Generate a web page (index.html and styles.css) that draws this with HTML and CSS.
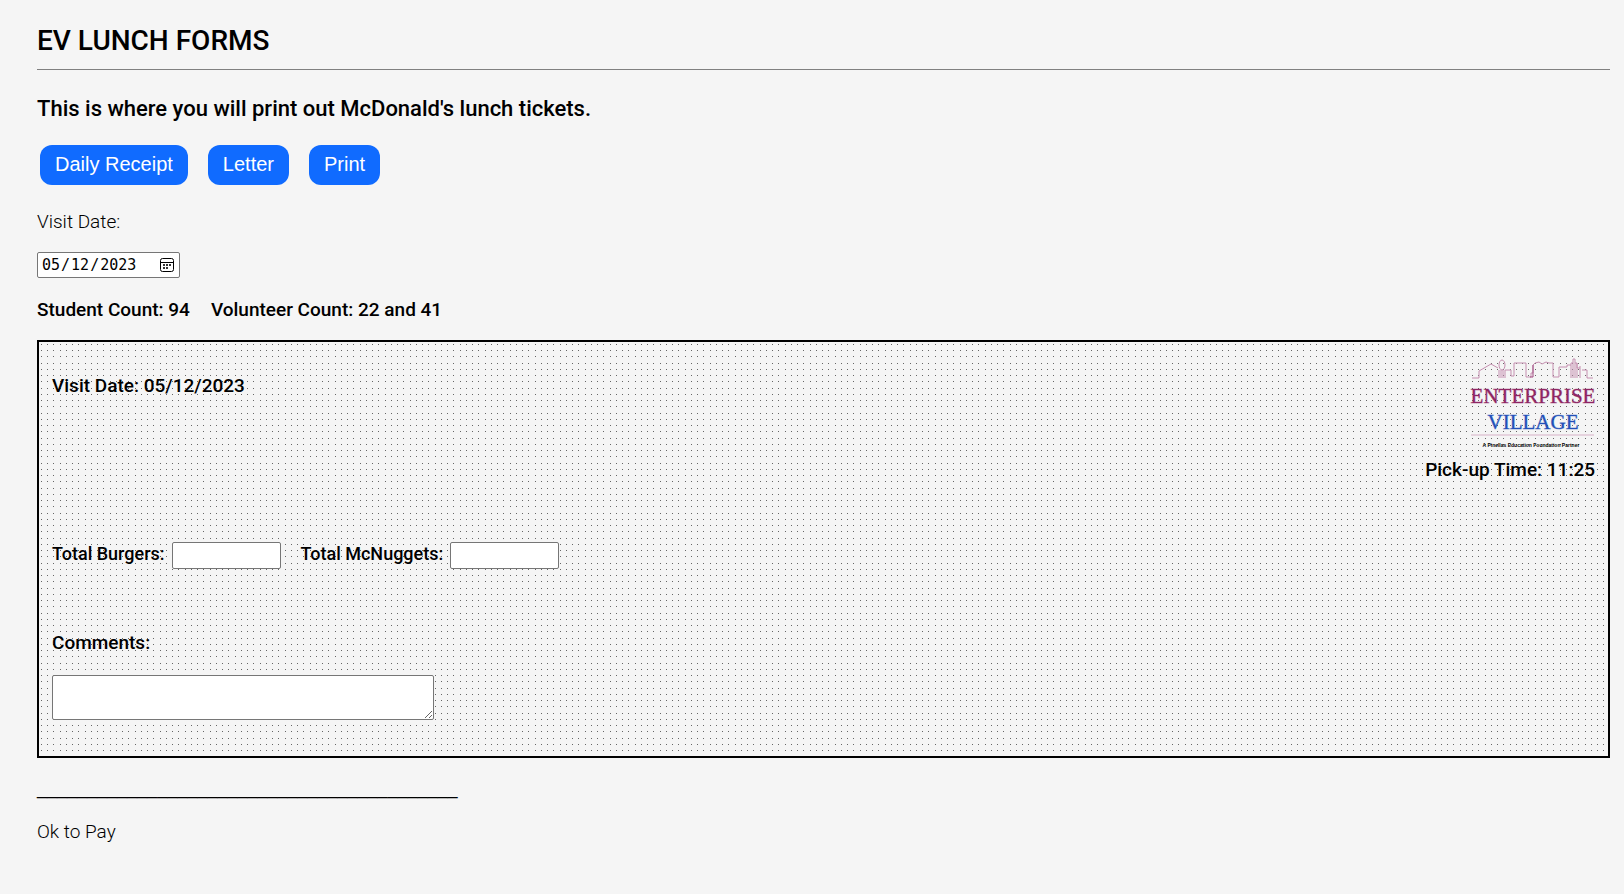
FILE: index.html
```html
<!DOCTYPE html>
<html lang="en">
<head>
<meta charset="utf-8">
<title>EV Lunch Forms</title>
<link rel="stylesheet" href="styles.css">
</head>
<body>
<main class="page">
  <h1 class="title">EV LUNCH FORMS</h1>
  <h2 class="intro">This is where you will print out McDonald's lunch tickets.</h2>
  <div class="actions">
    <button class="button" type="button">Daily Receipt</button>
    <button class="button" type="button">Letter</button>
    <button class="button" type="button">Print</button>
  </div>
  <label class="date-label" for="visit-date">Visit Date:</label>
  <input class="date-input" id="visit-date" type="date" value="2023-05-12">
  <p class="counts"><span>Student Count: 94</span><span>Volunteer Count: 22 and 41</span></p>

  <section class="ticket">
    <header class="ticket-head">
      <p class="ticket-date">Visit Date: 05/12/2023</p>
      <div class="ticket-brand">
        <svg class="logo" viewBox="0 0 125 92" role="img" aria-label="Enterprise Village">
          <g fill="none" stroke="#c58fb0">
            <path d="M2 20H9V13L21 6L28 10M29 20V12M35 20V12H41V18H44V5H56V19H61V15H63V7L65 5L69 4L72 6L76 4L79 5H83V19H89V9H97V7H101M107 5V10H110M112 12H117V20H123"/>
            <ellipse cx="32" cy="7" rx="3" ry="5"/>
            <path d="M31 12V20M33 12V20"/>
            <path d="M101 20V5H103V1H105V5H107V20M103 5V20M105 5V20M110 8V20"/>
          </g>
          <path d="M63 7V19M63 19H60" fill="none" stroke="#a04a80"/>
          <text class="logo-name" x="63" y="45">ENTERPRISE</text>
          <text class="logo-place" x="63" y="71">VILLAGE</text>
          <path d="M1 77H124" stroke="#e6d3de" stroke-width="2"/>
          <text class="logo-note" x="61" y="89">A Pinellas Education Foundation Partner</text>
        </svg>
        <p class="pickup">Pick-up Time: 11:25</p>
      </div>
    </header>
    <div class="totals">
      <label class="total">Total Burgers: <input class="box" type="text"></label>
      <label class="total">Total McNuggets: <input class="box" type="text"></label>
    </div>
    <label class="comments-label" for="comments">Comments:</label>
    <textarea class="comments" id="comments"></textarea>
  </section>

  <p class="signature">__________________________________________</p>
  <p class="approval">Ok to Pay</p>
</main>
</body>
</html>
```
FILE: styles.css
```css
* { box-sizing: border-box; }
body {
  margin: 0;
  background: #f5f5f5;
  color: #000;
  font: 300 19px/24px Roboto, "Liberation Sans", sans-serif;
}
h1, h2, p { margin: 0; font-weight: 500; }
.page {
  display: flex;
  flex-direction: column;
  align-items: flex-start;
  padding: 21px 14px 40px 37px;
}
.title {
  align-self: stretch;
  padding-bottom: 8px;
  border-bottom: 1px solid #808080;
  font-size: 28px;
  line-height: 40px;
}
.intro { margin-top: 23px; font-size: 22px; line-height: 32px; }
.actions { display: flex; gap: 20px; margin: 20px 3px 25px; }
.button {
  height: 40px;
  padding: 0 15px 2px;
  border: 0;
  border-radius: 12px;
  background: #106bff;
  color: #fff;
  font: 20px "Liberation Sans", Arial, sans-serif;
}
.date-label { margin-bottom: 18px; }
.date-input {
  width: 143px;
  height: 26px;
  padding: 0 5px 0 3px;
  border: 1px solid #767676;
  border-radius: 2px;
  background: #fff;
  color: #000;
  font: 15px "DejaVu Sans Mono", monospace;
}
.date-input::-webkit-calendar-picker-indicator {
  width: 14px;
  height: 14px;
  padding: 0;
  background: url("data:image/svg+xml,%3Csvg xmlns='http://www.w3.org/2000/svg' viewBox='0 0 14 14'%3E%3Crect x='.5' y='.5' width='13' height='13' rx='2' fill='none' stroke='%23000'/%3E%3Cpath d='M1 4.5H13' stroke='%23000'/%3E%3Cpath d='M6 6h2v2H6zM9 6h2v2H9zM3 6h2v2H3zM3 9h2v2H3zM6 9h2v2H6z' fill='%23333'/%3E%3C/svg%3E") center / 14px 14px no-repeat;
}
.counts { display: flex; gap: 21px; margin: 20px 0 18px; }
.ticket {
  display: flex;
  flex-direction: column;
  align-items: flex-start;
  align-self: stretch;
  padding: 16px 13px 36px;
  border: 2px solid #000;
  background: url("data:image/svg+xml,%3Csvg xmlns='http://www.w3.org/2000/svg' width='25' height='25' fill='%23666'%3E%3Cpath d='M2 2h1v1h-1zM8 2h1v1h-1zM14 2h1v1h-1zM21 2h1v1h-1zM2 8h1v1h-1zM8 8h1v1h-1zM14 8h1v1h-1zM21 8h1v1h-1zM2 14h1v1h-1zM8 14h1v1h-1zM14 14h1v1h-1zM21 14h1v1h-1zM2 21h1v1h-1zM8 21h1v1h-1zM14 21h1v1h-1zM21 21h1v1h-1z'/%3E%3C/svg%3E");
}
.ticket-head { display: flex; justify-content: space-between; align-self: stretch; }
.ticket-date { margin-top: 16px; }
.ticket-brand { display: flex; flex-direction: column; align-items: flex-end; }
.logo { width: 125px; height: 92px; }
.logo text { text-anchor: middle; font-family: "Liberation Serif", serif; }
.logo .logo-name { fill: #8f2563; stroke: #8f2563; font-size: 21px; }
.logo .logo-place { fill: #2350b8; stroke: #2350b8; font-size: 21px; }
.logo .logo-name, .logo .logo-place { stroke-opacity: 0.4; }
.logo .logo-note { font: 700 5px "Liberation Sans", sans-serif; }
.pickup { margin-top: 8px; }
.totals { display: flex; gap: 20px; margin-top: 60px; }
.total { display: flex; align-items: flex-start; gap: 7px; font-size: 18px; font-weight: 500; }
.box {
  width: 109px;
  height: 27px;
  border: 1px solid #767676;
  border-radius: 2px;
  background: #fff;
}
.comments-label { margin: 62px 0 20px; font-weight: 500; }
.comments {
  width: 382px;
  height: 45px;
  border: 1px solid #767676;
  border-radius: 2px;
  background: #fff;
}
.signature { margin-top: 18px; font-weight: 400; font-family: "Liberation Sans", sans-serif; font-size: 18px; }
.approval { margin-top: 20px; font-weight: 300; }
```
